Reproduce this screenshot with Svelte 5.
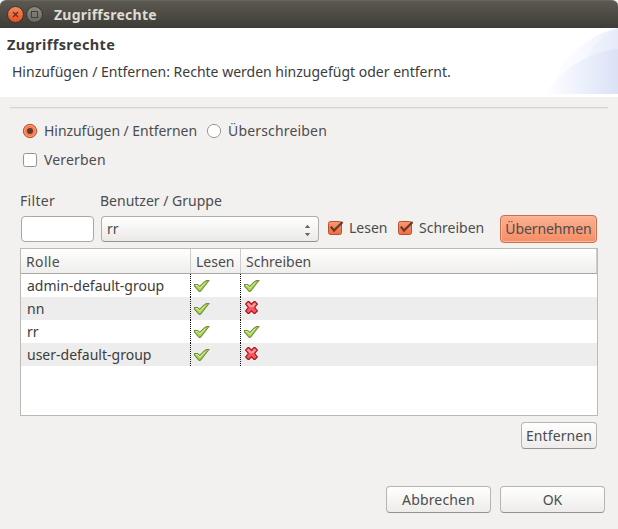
<script>
  const rows = [
    { name: 'admin-default-group', read: true, write: true },
    { name: 'nn', read: true, write: false },
    { name: 'rr', read: true, write: true },
    { name: 'user-default-group', read: true, write: false }
  ];
</script>

{#snippet mark(ok)}
  {#if ok}
    <svg class="mark yes" width="17" height="14" viewBox="0 0 17 14">
      <path d="M1.5 5.5H4.5L6.8 7.4L11 3.2L13.5 1.5H15.8L8 11.5L7 12.4H6.2L1.5 7Z" fill="#add850" stroke="#718f3c" stroke-width="1.1" />
      <path d="M2.8 6.5H4.3L6.9 8.8L12.4 3.4" fill="none" stroke="#e6f5bd" stroke-width=".9" />
    </svg>
  {:else}
    <svg class="mark no" width="17" height="14" viewBox="0 0 17 14">
      <path d="M5 .6H6L8.5 3.2L11 .6H12L14.4 3L11.7 6.5L14.4 10L12 12.4H11L8.5 9.8L6 12.4H5L2.6 10L5.3 6.5L2.6 3Z" fill="#f5575f" stroke="#a5141c" stroke-width="1.1" />
      <path d="M5.3 1.7L8.5 4.8L11.7 1.7L13 3L10.4 6.2H6.6L4 3Z" fill="#ff9a9a" />
    </svg>
  {/if}
{/snippet}

{#snippet checked()}
  <svg class="check" width="18" height="17" viewBox="0 0 18 17">
    <defs><linearGradient id="orange" x2="0" y2="1"><stop stop-color="#fa9a72" /><stop offset="1" stop-color="#ee6b3e" /></linearGradient></defs>
    <rect x="1.5" y="2.5" width="13" height="13" rx="2" fill="url(#orange)" stroke="#b9532f" />
    <path d="M3.8 7.6L7 11.5L15.6 3" fill="none" stroke="#66392c" stroke-width="2.2" />
  </svg>
{/snippet}

<div class="window">
  <div class="titlebar">
    <svg width="46" height="28" viewBox="0 0 46 28">
      <defs>
        <linearGradient id="close" x2="0" y2="1"><stop stop-color="#f58b61" /><stop offset="1" stop-color="#e5501f" /></linearGradient>
        <linearGradient id="max" x2="0" y2="1"><stop stop-color="#8d8a82" /><stop offset="1" stop-color="#68665f" /></linearGradient>
      </defs>
      <circle cx="15.5" cy="14.5" r="8" fill="url(#close)" stroke="#35332f" />
      <path d="M13 12l5 5M18 12l-5 5" stroke="#61301e" stroke-width="1.3" />
      <circle cx="34.5" cy="14.5" r="8" fill="url(#max)" stroke="#35332f" />
      <rect x="31.5" y="11.5" width="6" height="6" fill="none" stroke="#42403b" />
    </svg>
    <span class="caption">Zugriffsrechte</span>
  </div>

  <header>
    <div class="intro">
      <h1>Zugriffsrechte</h1>
      <p>Hinzufügen / Entfernen: Rechte werden hinzugefügt oder entfernt.</p>
    </div>
    <svg class="banner" width="74" height="66" viewBox="0 0 74 66">
      <defs>
        <linearGradient id="wave"><stop stop-color="#fff" /><stop offset=".5" stop-color="#edf1fc" /><stop offset="1" stop-color="#dbe2f6" /></linearGradient>
        <linearGradient id="arc"><stop stop-color="#fff" /><stop offset=".5" stop-color="#f7f9fe" /><stop offset="1" stop-color="#eaeffb" /></linearGradient>
        <linearGradient id="arc2"><stop stop-color="#f0f4fd" /><stop offset="1" stop-color="#e2e8f8" /></linearGradient>
      </defs>
      <path d="M4 66C14 34 42 7 74 0V66Z" fill="url(#arc)" />
      <path d="M32 66C34 36 50 11 74 0V66Z" fill="url(#arc2)" opacity=".6" />
      <path d="M0 66C19 40 45 24 74 21V66Z" fill="url(#wave)" />
    </svg>
  </header>

  <main>
    <hr />
    <div class="modes">
      <div class="opt">
        <svg width="16" height="16" viewBox="0 0 16 16">
          <circle cx="8" cy="8" r="6.7" fill="#f47d52" stroke="#b9532f" />
          <circle cx="8" cy="8" r="5.5" fill="none" stroke="#faa27e" stroke-width=".8" />
          <circle cx="8" cy="8" r="3" fill="#66392c" />
        </svg>
        <span class="t-add">Hinzufügen / Entfernen</span>
      </div>
      <div class="opt">
        <svg width="16" height="16" viewBox="0 0 16 16"><circle cx="8" cy="8" r="6.6" fill="#fff" stroke="#9b9993" /></svg>
        <span class="t-over">Überschreiben</span>
      </div>
    </div>
    <div class="opt inherit">
      <svg width="16" height="16" viewBox="0 0 16 16"><rect x="1.5" y="1.5" width="13" height="13" rx="2" fill="#fff" stroke="#96948e" /></svg>
      <span class="t-inherit">Vererben</span>
    </div>

    <div class="labels">
      <div class="lf"><span class="t-filter">Filter</span></div>
      <div>Benutzer / Gruppe</div>
    </div>
    <div class="controls">
      <input type="text" aria-label="Filter" />
      <div class="select">
        <span>rr</span>
        <svg width="7" height="13" viewBox="0 0 7 13"><path d="M.8 4L3.5 .8L6.2 4ZM.8 9L3.5 12.2L6.2 9Z" fill="#686762" /></svg>
      </div>
      <div class="opt read">{@render checked()}<span>Lesen</span></div>
      <div class="opt write">{@render checked()}<span>Schreiben</span></div>
      <button class="apply"><span class="t-apply">Übernehmen</span></button>
    </div>

    <div class="table">
      <div class="thead">
        <div class="c1"><span class="t-role">Rolle</span></div>
        <div class="c2">Lesen</div>
        <div class="c3">Schreiben</div>
      </div>
      {#each rows as row}
        <div class="tr">
          <div class="c1">{row.name}</div>
          <div class="c2">{@render mark(row.read)}</div>
          <div class="c3">{@render mark(row.write)}</div>
        </div>
      {/each}
    </div>
    <div class="under"><button class="remove"><span class="t-remove">Entfernen</span></button></div>
    <footer>
      <button><span class="t-cancel">Abbrechen</span></button>
      <button>OK</button>
    </footer>
  </main>
</div>

<style>
  :global(body) { background: #f2f1f0; overflow: hidden; }
  * { box-sizing: border-box; }
  .window {
    width: 618px; height: 529px; background: #f2f1f0; color: #4c4c4c;
    font: 14px/20px "Noto Sans", "Open Sans", sans-serif; white-space: nowrap;
  }
  svg { display: block; flex: none; }
  .titlebar {
    height: 28px; display: flex; align-items: center; gap: 8px;
    background: linear-gradient(#5c5951, #3d3c37); color: #dfdbd2;
    border-radius: 6px 6px 0 0; border-top: 1px solid #68665d; font-weight: 700;
  }
  .titlebar svg { margin-top: -1px; }
  .caption { letter-spacing: .24px; }
  header { height: 69px; background: #fff; display: flex; justify-content: space-between; color: #3c3c3c; }
  .intro { padding: 6px 0 0 7px; }
  h1 { margin: 0; font-size: 14.5px; line-height: 20px; font-weight: 700; letter-spacing: .38px; }
  p { margin: 8px 0 0 5px; }
  main { padding: 10px 10px 0; }
  hr { margin: 0; border: 0; border-top: 1px solid #d6d4d2; border-bottom: 1px solid #e9e8e6; width: 598px; }
  .modes { display: flex; padding: 12px 0 0 12px; height: 34px; }
  .opt { display: flex; align-items: center; gap: 6px; height: 20px; }
  .modes .opt:first-child { width: 184px; }
  .t-add { letter-spacing: -.05px; }
  .t-over, .t-inherit { letter-spacing: .17px; }
  .t-filter { letter-spacing: .3px; }
  .inherit { padding-left: 12px; margin-top: 7px; }
  .labels { display: flex; margin: 21px 0 0 10px; height: 20px; }
  .lf { width: 80px; }
  .controls { display: flex; align-items: center; margin: 3px 0 0 10px; height: 30px; }
  input { width: 73px; height: 26px; border: 1px solid #aaa7a2; border-radius: 4px; background: #fff; padding: 0; margin: 0 7px 0 1px; flex: none; }
  .select {
    width: 218px; height: 26px; display: flex; justify-content: space-between; align-items: center;
    padding: 0 7px 0 5px; border: 1px solid #b0ada8; border-bottom-color: #96938e; border-radius: 4px;
    background: linear-gradient(#fff, #ebeae8); flex: none;
  }
  .select svg { margin-top: 2px; }
  .read { margin-left: 8px; width: 70px; flex: none; }
  .read, .write { gap: 4px; margin-top: -3px; }
  .write { width: 102px; margin-right: 1px; flex: none; }
  button {
    font: inherit; color: #4c4c4c; padding: 0; width: 105px; height: 27px; border: 1px solid #b8b4af;
    border-bottom-color: #96938e; border-radius: 4px; background: linear-gradient(#fff, #edecea);
    display: flex; align-items: center; justify-content: center;
  }
  .apply {
    width: 97px; height: 28px; border-color: #c6714f; flex: none;
    background: linear-gradient(#fcb092, #f58d64); box-shadow: inset 0 0 0 1px #fbb79c;
  }
  .t-apply { letter-spacing: -.1px; }
  .table { margin: 4px 0 0 10px; width: 578px; height: 168px; border: 1px solid #bcbab4; background: #fff; color: #3c3c3c; }
  .thead { display: flex; height: 25px; border-bottom: 1px solid #aaa8a4; background: linear-gradient(#fff, #efeeec); color: #4c4c4c; }
  .thead div { border-right: 1px solid #cfcdc9; padding: 3px 0 0 5px; }
  .t-role { letter-spacing: .35px; }
  .c1 { width: 170px; }
  .c2 { width: 50px; }
  .c3 { width: 356px; }
  .tr { display: flex; height: 23px; }
  .tr:nth-child(odd) { background: #ededed; }
  .tr .c1, .tr .c2 {
    background: repeating-linear-gradient(#111 0 1px, transparent 1px 2px) right top / 1px 100% no-repeat;
  }
  .tr .c1 { padding: 2px 0 0 6px; }
  .yes { margin: 5px 0 0 2px; }
  .no { margin: 4px 0 0 2px; }
  .under { display: flex; justify-content: flex-end; padding: 6px 11px 0 0; }
  .remove { width: 76px; }
  .t-remove { letter-spacing: .1px; }
  .t-cancel { letter-spacing: .15px; }
  footer { display: flex; justify-content: flex-end; gap: 9px; padding: 37px 3px 0 0; }
</style>
